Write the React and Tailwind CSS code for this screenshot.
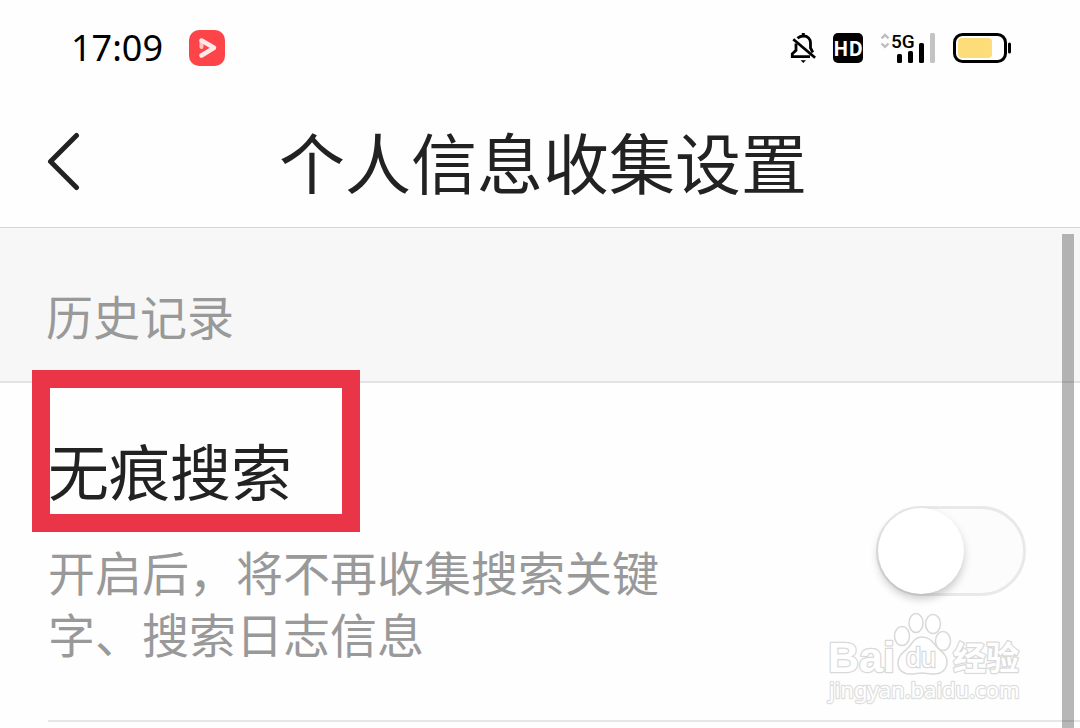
import { useState } from 'react';

function RecorderBadge() {
  return (
    <svg className="size-9" viewBox="0 0 36 36" aria-hidden="true">
      <rect width="36" height="36" rx="10" fill="#fd4549" />
      <path d="M12.5 11v14" stroke="#ffc4c4" strokeWidth="4" strokeLinecap="round" strokeDasharray="6 20" />
      <path d="M12.5 10.500L25 17.800 12.500 25.500" fill="none" stroke="#ffe9e9" strokeWidth="4.5" strokeLinecap="round" strokeLinejoin="round" />
    </svg>
  );
}

function MutedBell() {
  return (
    <svg className="h-8 w-7 overflow-visible" viewBox="0 0 28 32" fill="none" stroke="#000" aria-hidden="true">
      <path d="M9.5 6.200C11 4.800 13 4 15.300 4c4.500 0 7.200 3 7.200 7v5l2.300 4.500" strokeWidth="2.8" />
      <path d="M8 11.500v6.800L4.300 21.800v2.900H22" strokeWidth="2.8" />
      <path d="M15.300 4V1" strokeWidth="3" />
      <path d="M5.300 7.300l21.800 18.500" strokeWidth="2.8" />
      <path d="M12.600 28.200h5.400l-2.700 2.900z" fill="#000" stroke="none" />
    </svg>
  );
}

function HdBadge() {
  return (
    <span className="flex size-[30px] items-center justify-center rounded-[5px] bg-black font-['Noto_Sans_CJK_SC',sans-serif] text-[20px] leading-none font-bold text-white">
      HD
    </span>
  );
}

function MobileSignal() {
  return (
    <svg className="h-[30px] w-14 overflow-visible" viewBox="0 0 56 30" role="img" aria-label="5G">
      <path d="M1.5 5.300L5 2l3.500 3.300M1.500 10.500L5 13.800l3.500-3.300" fill="none" stroke="#bdbdbd" strokeWidth="2.4" />
      <text x="11" y="15" className="font-['Roboto',sans-serif] text-[19px] font-medium">
        5G
      </text>
      <rect x="17" y="21" width="5" height="9" rx="1.5" />
      <rect x="28" y="18" width="5" height="12" rx="1.5" />
      <rect x="39" y="10" width="5" height="20" rx="1.5" />
      <rect x="50" y="0" width="5" height="30" rx="1.5" fill="#c3c3c3" />
    </svg>
  );
}

function Battery() {
  return (
    <svg className="h-[30px] w-[58px]" viewBox="0 0 58 30" aria-hidden="true">
      <rect x="1.5" y="1.5" width="51" height="27" rx="8" fill="none" stroke="#000" strokeWidth="3" />
      <rect x="5" y="5" width="34" height="20" rx="4" fill="#fddc7a" />
      <rect x="55" y="9.5" width="3" height="11" rx="1.5" />
    </svg>
  );
}

function StatusBar() {
  return (
    <div className="flex h-24 items-center justify-between pr-[69px] pl-[71px]">
      <div className="flex items-center gap-[26px]">
        <span className="font-['Noto_Sans',sans-serif] text-[36px] leading-none text-black">17:09</span>
        <RecorderBadge />
      </div>
      <div className="flex items-center gap-[17px]">
        <MutedBell />
        <HdBadge />
        <MobileSignal />
        <Battery />
      </div>
    </div>
  );
}

function TitleBar({ title }) {
  return (
    <header className="relative flex h-33 items-center justify-center border-b border-[#d6d6d6]">
      <button type="button" aria-label="返回" className="absolute left-[46px]">
        <svg className="h-15 w-9" viewBox="0 0 36 60" fill="none" aria-hidden="true">
          <path d="M30.5 3.500L4.500 29.500L30.500 55.500" stroke="#222" strokeWidth="5" strokeLinecap="round" strokeLinejoin="round" />
        </svg>
      </button>
      <h1 className="pb-1 pl-1.5 text-[66px] leading-none font-normal text-[#222]">{title}</h1>
    </header>
  );
}

function SettingRow({ id, title, description, highlighted }) {
  const [checked, setChecked] = useState(false);

  return (
    <div className="ml-12 flex items-end justify-between border-b-2 border-[#e6e6e6] pt-[49px] pr-[54px] pb-14">
      <div className="w-[620px]">
        <label htmlFor={id} className="relative block text-[61px] leading-[76px] text-[#222]">
          {title}
          {highlighted && (
            <span className="pointer-events-none absolute -top-[62px] -left-4 h-[162px] w-[328px] border-18 border-[#e93547]" />
          )}
        </label>
        <p id={`${id}-desc`} className="mt-8 text-[47px] leading-[62px] text-[#999]">
          {description}
        </p>
      </div>
      <input
        id={id}
        type="checkbox"
        role="switch"
        aria-describedby={`${id}-desc`}
        checked={checked}
        onChange={(e) => setChecked(e.target.checked)}
        className="mb-[68px] h-[90px] w-[150px] shrink-0 appearance-none rounded-full border-3 border-[#e9e9e9] bg-[#fcfcfc] before:block before:size-[86px] before:-translate-x-px before:-translate-y-px before:rounded-full before:bg-white before:shadow-[0_5px_8px_rgba(0,0,0,0.2)] checked:bg-[#4e6ef2] checked:before:translate-x-[60px]"
      />
    </div>
  );
}

function Watermark() {
  return (
    <svg
      className="pointer-events-none absolute right-[56px] bottom-4 h-25 w-50"
      viewBox="0 0 200 100"
      fill="#fff"
      stroke="#d9d9d9"
      strokeWidth="1.5"
      aria-hidden="true"
    >
      <g strokeWidth="2.5" strokeLinejoin="round" className="[paint-order:stroke]">
        <text x="4" y="60" className="font-['Liberation_Sans',sans-serif] text-[43px] font-bold">Bai</text>
        <text x="129" y="58" className="font-['Noto_Sans_CJK_SC',sans-serif] text-[33px] font-bold">经验</text>
        <text x="5" y="86" stroke="#dedede" className="font-['Noto_Sans',sans-serif] text-[22px]">jingyan.baidu.com</text>
      </g>
      <ellipse cx="78" cy="24" rx="7.5" ry="9.5" />
      <ellipse cx="92" cy="11" rx="7" ry="9.5" />
      <ellipse cx="109" cy="12" rx="7.5" ry="9.5" />
      <ellipse cx="119" cy="29" rx="7.5" ry="9.5" />
      <path d="M98 25c-7 0-9 5-13 10-5 5-11 8-11 16 0 7 5 11 12 11 5 0 8-1 12-1s7 1 12 1c8 0 13-5 13-12 0-8-6-10-11-16-4-5-7-9-14-9z" />
      <text x="82" y="55" strokeWidth="2.5" className="font-['Liberation_Sans',sans-serif] text-[27px] [paint-order:stroke]">du</text>
    </svg>
  );
}

export default function App() {
  return (
    <div className="relative flex min-h-screen flex-col overflow-hidden bg-[#fefefe] font-['Noto_Sans_CJK_SC',sans-serif]">
      <StatusBar />
      <TitleBar title="个人信息收集设置" />
      <main className="relative flex-1">
        <h2 className="border-b-2 border-[#e3e3e3] bg-[#f7f7f7] px-[46px] pt-14 pb-[35px] text-[47px] leading-[62px] font-normal text-[#999]">
          历史记录
        </h2>
        <SettingRow
          id="incognito-search"
          title="无痕搜索"
          description="开启后，将不再收集搜索关键字、搜索日志信息"
          highlighted
        />
        <div className="absolute top-1.5 right-1.5 bottom-0 w-3 bg-black/28" />
      </main>
      <Watermark />
    </div>
  );
}
